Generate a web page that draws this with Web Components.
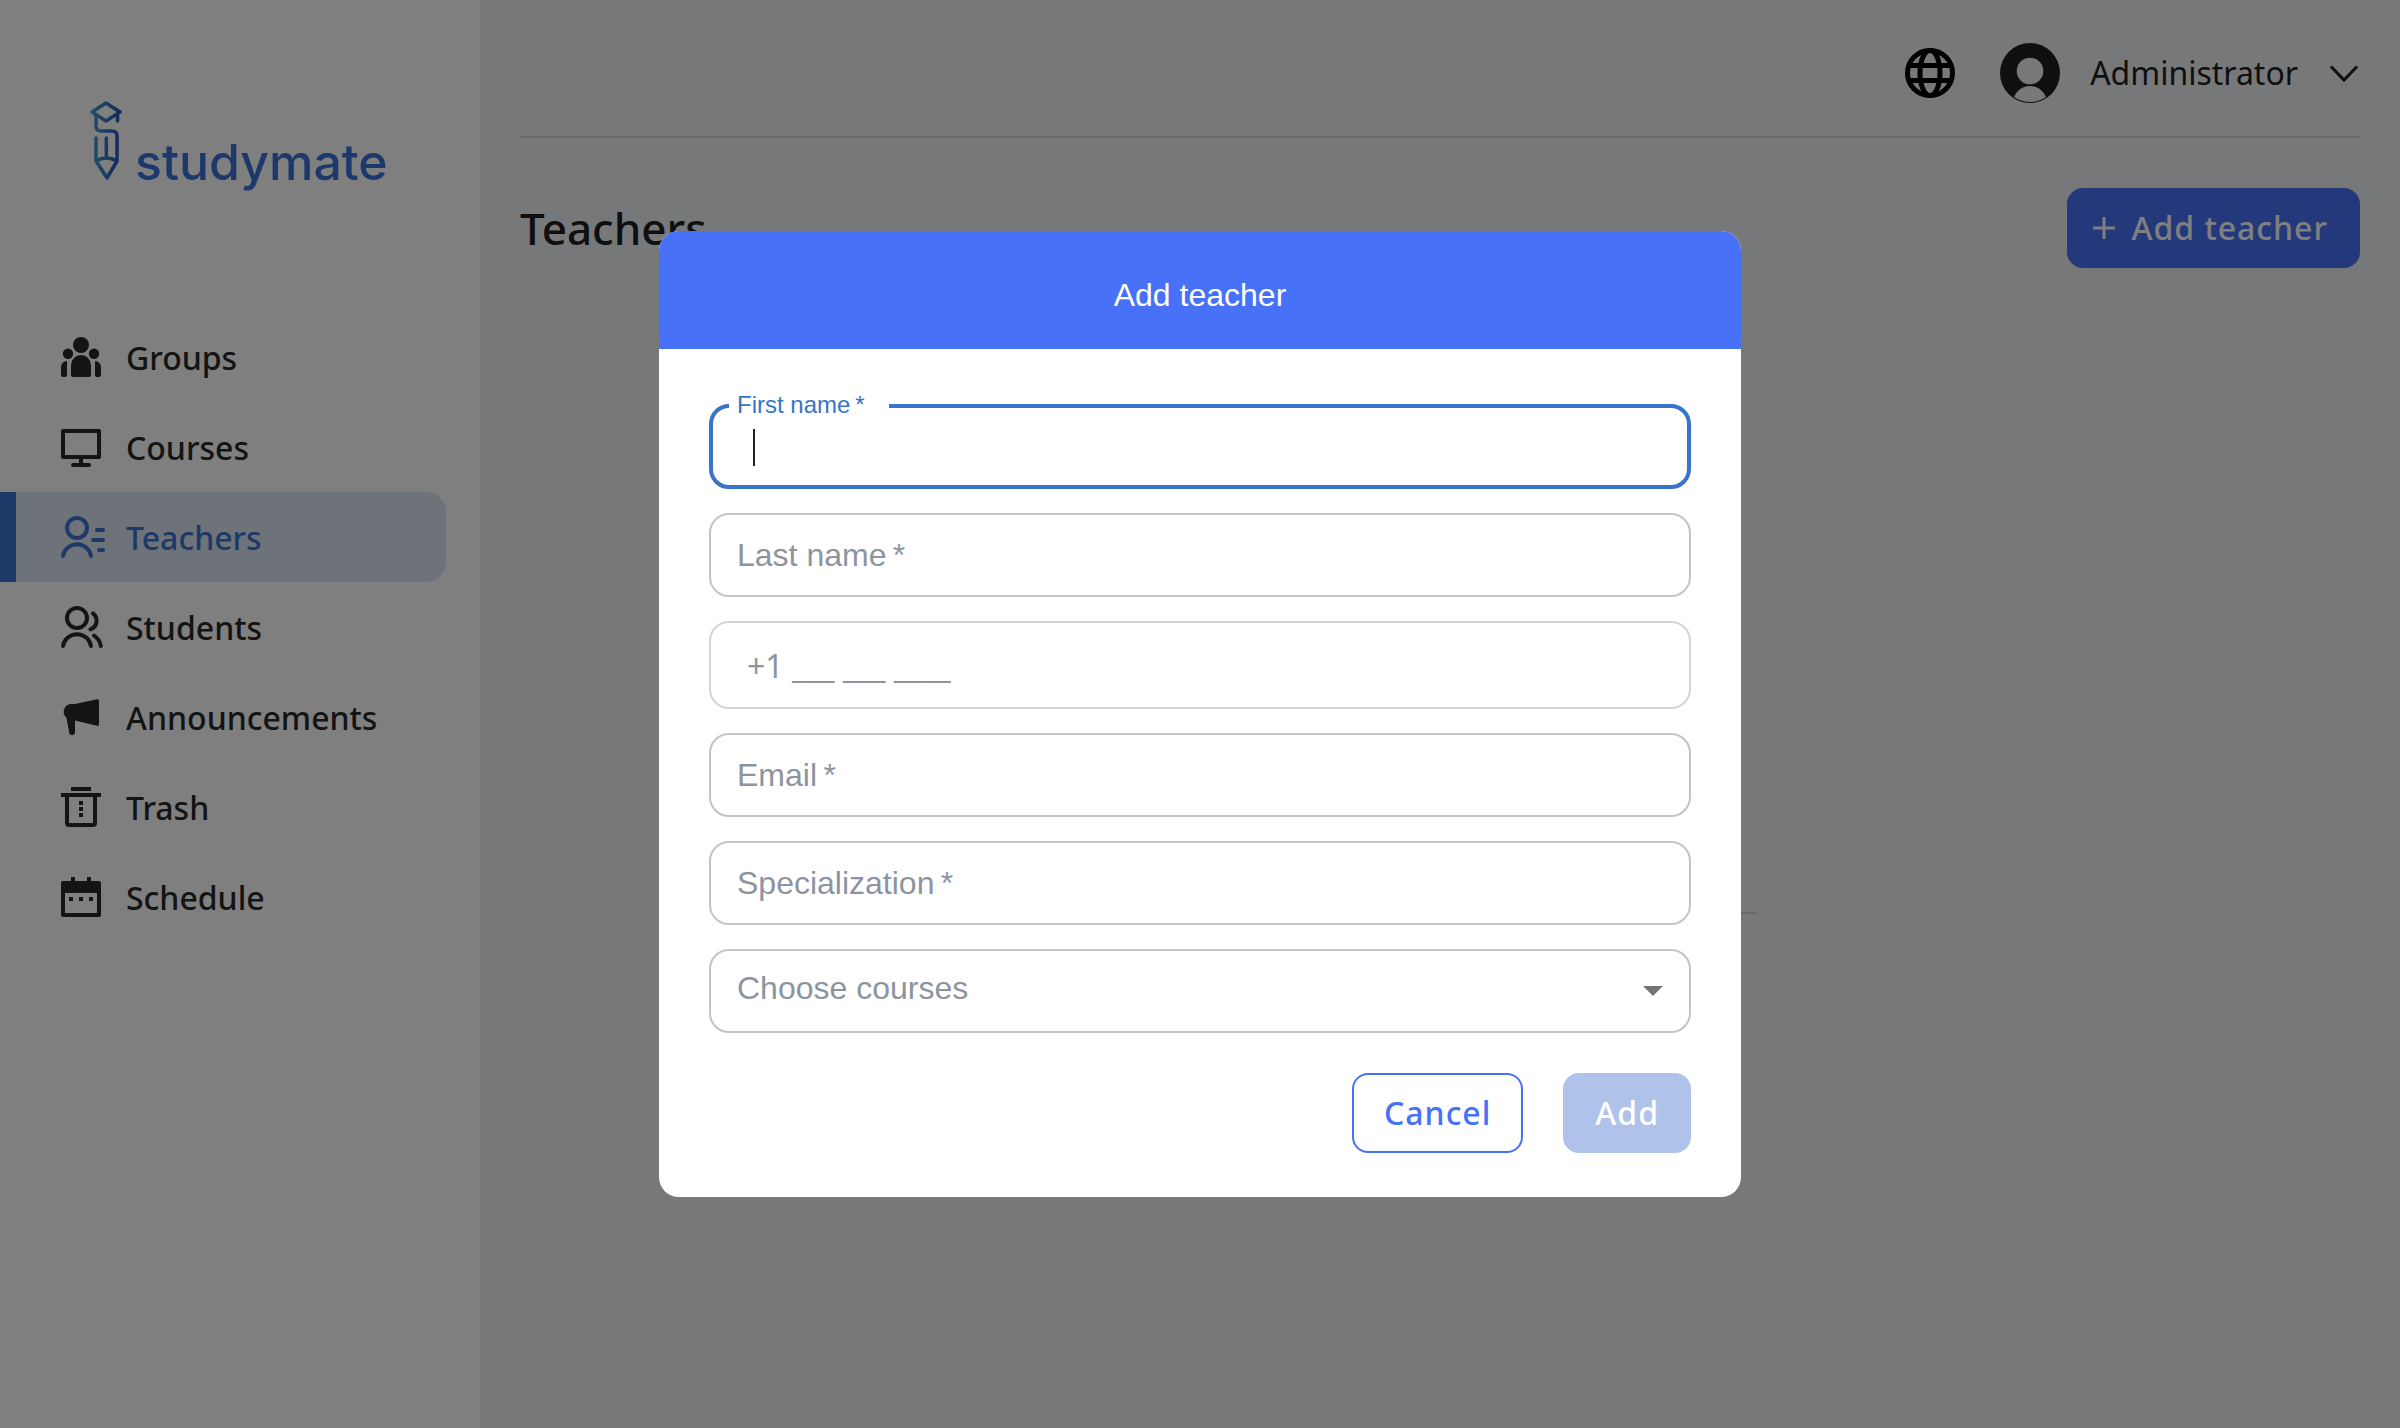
<!DOCTYPE html>
<html lang="en">
<head>
<meta charset="utf-8">
<title>Studymate – Teachers</title>
<style>
  html, body { height: 100%; }
  body { margin: 0; background: #eff0f4; font-family: "Noto Sans", "Open Sans", sans-serif; color: #292929; }
</style>
</head>
<body>
<study-app></study-app>

<script>
const ICONS = {
  groups: '<g fill="currentColor"><circle cx="12" cy="6" r="4"/><circle cx="5.5" cy="10.4" r="2.6"/><circle cx="18.500" cy="10.4" r="2.6"/><path d="M12 11a5 5 0 0 1 5 5v5a1 1 0 0 1-1 1H8a1 1 0 0 1-1-1v-5a5 5 0 0 1 5-5zM5 14v7a1 1 0 0 1-1 1H3a1 1 0 0 1-1-1v-4a3 3 0 0 1 3-3zM19 14a3 3 0 0 1 3 3v4a1 1 0 0 1-1 1h-1a1 1 0 0 1-1-1z"/></g>',
  courses: '<g fill="none" stroke="currentColor" stroke-width="2" stroke-linejoin="round" stroke-linecap="round"><path d="M3 4h18v13H3zM12 17v4M8 21h8"/></g>',
  teachers: '<g fill="none" stroke="currentColor" stroke-width="2" stroke-linecap="round"><circle cx="10" cy="7.500" r="5"/><path d="M3 21.500a7.100 7.100 0 0 1 14 0M20 8.500h3M18 13.500h5M21 18.500h2"/></g>',
  students: '<g fill="none" stroke="currentColor" stroke-width="2" stroke-linecap="round"><circle cx="10" cy="7.500" r="5"/><path d="M3 21.500a7.100 7.100 0 0 1 14 0M18 5.200a4.600 4.600 0 0 1-1.300 8M18.500 16.300a7.500 7.500 0 0 1 3.400 5.200"/></g>',
  announcements: '<path fill="currentColor" d="M20 3.100a.9.9 0 0 1 1 .9v11.500a.9.900 0 0 1-1.100.9L9 13.700V19.500a1.400 1.400 0 0 1-2.900.2L4.700 12.400A4 4 0 0 1 6.500 5.500H9z"/>',
  trash: '<path fill="none" stroke="currentColor" stroke-width="2" d="M7 3h10M2 6h20M5 6v14q0 1 1 1h12q1 0 1-1V6"/><path fill="currentColor" d="M11 9h2v2h-2zM11 12h2v2h-2zM11 15h2v2h-2z"/>',
  schedule: '<path fill="currentColor" fill-rule="evenodd" d="M7 2h2v2h6V2h2v2h4a1 1 0 0 1 1 1v16a1 1 0 0 1-1 1H3a1 1 0 0 1-1-1V5a1 1 0 0 1 1-1h4zM4 10v10h16V10zM6 12h2v2H6zM11 12h2v2h-2zM16 12h2v2h-2z"/>'
};

function define(name, html, setup) {
  const template = document.createElement('template');
  template.innerHTML = html;
  customElements.define(name, class extends HTMLElement {
    connectedCallback() {
      if (this.shadowRoot) return;
      const root = this.attachShadow({ mode: 'open' });
      root.append(template.content.cloneNode(true));
      if (setup) setup.call(this, root);
    }
  });
}

define('app-logo', `
<style>
  :host { display: flex; align-items: flex-start; gap: 12px; color: #3a72d6; }
  svg { width: 34px; height: 82px; flex: none; }
  span { font: 500 50px/72px Inter, sans-serif; padding-top: 26px; }
</style>
<svg viewBox="0 0 34 82" aria-hidden="true">
  <defs><linearGradient id="g" gradientUnits="userSpaceOnUse" x1="2" y1="40" x2="32" y2="40"><stop offset="0" stop-color="#4a9fd0"/><stop offset="1" stop-color="#2450b8"/></linearGradient></defs>
  <path fill="none" stroke="url(#g)" stroke-width="3.500" stroke-linejoin="round" stroke-linecap="round" d="M17 3L31 12L17 21L3 12zM28.500 14v7M7 15v11q0 5 5 5h11q5 0 5 5v25L18 78L7 61V38M17.300 38v19M7 61q5-3 10.500-3t10.500 3"/>
</svg>
<span>studymate</span>`);

define('nav-item', `
<style>
  :host { display: block; }
  a { display: flex; align-items: center; gap: 21px; height: 90px; margin-right: 34px; padding-left: 57px; box-sizing: border-box; border-radius: 0 20px 20px 0; color: #292929; font-size: 32px; font-weight: 500; text-decoration: none; }
  :host([active]) a { background: #dde6f4; color: #3a72d0; border-left: 16px solid #3a72d0; padding-left: 41px; }
  svg { width: 48px; height: 48px; overflow: visible; }
</style>
<a href="#"><svg viewBox="0 0 24 24" aria-hidden="true"></svg><slot></slot></a>`,
function (root) { root.querySelector('svg').innerHTML = ICONS[this.getAttribute('icon')]; });

define('side-bar', `
<style>
  :host { display: flex; flex-direction: column; width: 480px; flex: none; background: #fff; }
  app-logo { margin: 100px 0 0 89px; height: 212px; }
</style>
<app-logo></app-logo>
<nav aria-label="Main">
  <nav-item icon="groups">Groups</nav-item>
  <nav-item icon="courses">Courses</nav-item>
  <nav-item icon="teachers" active>Teachers</nav-item>
  <nav-item icon="students">Students</nav-item>
  <nav-item icon="announcements">Announcements</nav-item>
  <nav-item icon="trash">Trash</nav-item>
  <nav-item icon="schedule">Schedule</nav-item>
</nav>`);

define('app-button', `
<style>
  :host { display: inline-flex; }
  button { display: flex; align-items: center; gap: 16px; height: 80px; padding: 0 30px; border: 2px solid #4772f7; border-radius: 16px; background: #4772f7; color: #fff; font: 500 32px/44px "Noto Sans", "Open Sans", sans-serif; letter-spacing: 1px; }
  :host([outlined]) button { background: #fff; color: #4772f7; }
  :host([disabled]) button { background: #afc3ea; border-color: #afc3ea; }
  :host([icon]) button { padding-left: 24px; }
  svg { display: none; width: 22px; height: 22px; }
  :host([icon]) svg { display: block; }
</style>
<button type="button"><svg viewBox="0 0 22 22" aria-hidden="true"><path d="M11 1v20M1 11h20" stroke="currentColor" stroke-width="3" stroke-linecap="round"/></svg><slot></slot></button>`,
function (root) { root.querySelector('button').disabled = this.hasAttribute('disabled'); });

define('top-bar', `
<style>
  :host { display: flex; justify-content: flex-end; align-items: center; height: 136px; border-bottom: 2px solid #d4d4d8; }
  button { display: flex; align-items: center; border: 0; padding: 0; margin-top: 10px; background: none; color: #1f1f1f; font: 400 32px/44px "Noto Sans", "Open Sans", sans-serif; }
  .lang { color: #000; margin-right: 45px; }
  .user { gap: 30px; }
  svg { display: block; }
</style>
<button class="lang" type="button" aria-label="Language">
  <svg width="50" height="50" viewBox="0 0 50 50" fill="none" stroke="currentColor" stroke-width="5"><circle cx="25" cy="25" r="22.500"/><ellipse cx="25" cy="25" rx="10" ry="22.500"/><path d="M4 17.500h42M4 32.500h42"/></svg>
</button>
<button class="user" type="button">
  <svg width="60" height="60" viewBox="0 0 60 60"><defs><clipPath id="c"><circle cx="30" cy="30" r="29"/></clipPath></defs><circle cx="30" cy="30" r="30" fill="currentColor"/><circle cx="30" cy="28" r="13.300" fill="#eff0f4"/><ellipse cx="30" cy="60" rx="17" ry="17" fill="#eff0f4" clip-path="url(#c)"/></svg>
  <span>Administrator</span>
  <svg width="32" height="20" viewBox="0 0 32 20"><path d="M3 3.500L16 17L29 3.500" fill="none" stroke="currentColor" stroke-width="3"/></svg>
</button>`);

define('text-field', `
<style>
  :host { display: block; position: relative; }
  fieldset { margin: 0; padding: 0; min-width: 0; border: 2px solid #c4c4c4; border-radius: 20px; height: 84px; box-sizing: border-box; display: flex; align-items: center; }
  label { position: absolute; left: 28px; top: 24px; font: 32px/36px "Liberation Sans", Arial, sans-serif; color: #8d949f; pointer-events: none; }
  input { width: 100%; height: 80px; box-sizing: border-box; border: 0; outline: 0; padding: 0 36px; background: none; font: 32px/44px "Noto Sans", "Open Sans", sans-serif; color: #222; }
  input::placeholder { color: #8d949f; opacity: 1; }
  i { display: none; }
  :host([tall]) fieldset { height: 88px; border-color: #d4d4d4; }
  :host([active]) fieldset { height: 85px; border: 4px solid #3874cb; }
  :host([active]) label { top: -13px; left: 20px; padding: 0 24px 0 8px; font-size: 24px; line-height: 28px; background: #fff; color: #3874cb; }
  :host([active]) i { display: block; position: absolute; left: 44px; top: 25px; width: 2px; height: 37px; background: #222; }
</style>
<fieldset><input id="f"></fieldset><label for="f"></label><i></i>`,
function (root) {
  const input = root.querySelector('input'), label = root.querySelector('label');
  const text = this.getAttribute('label');
  if (text) label.textContent = text + '\u2009*'; else { label.remove(); input.setAttribute('aria-label', 'Phone'); }
  if (this.hasAttribute('placeholder')) input.placeholder = this.getAttribute('placeholder');
});

define('select-field', `
<style>
  :host { display: grid; align-items: center; }
  select, svg { grid-area: 1 / 1; }
  select { appearance: none; width: 100%; height: 84px; box-sizing: border-box; border: 2px solid #c4c4c4; border-radius: 20px; padding: 0 90px 6px 26px; background: #fff; color: #8d949f; font: 32px/36px "Liberation Sans", Arial, sans-serif; }
  svg { justify-self: end; margin-right: 28px; pointer-events: none; }
</style>
<select aria-label="Choose courses"><option>Choose courses</option></select>
<svg width="20" height="10" viewBox="0 0 20 10" aria-hidden="true"><path d="M0 0h20L10 10z" fill="#757575"/></svg>`);

define('teacher-dialog', `
<style>
  :host { position: fixed; inset: 0; display: flex; align-items: center; justify-content: center; background: rgba(0, 0, 0, .5); }
  section { width: 1082px; max-width: 92%; border-radius: 20px; overflow: hidden; background: #fff; }
  h2 { margin: 0; padding: 40px 0 30px; text-align: center; background: #4772f7; color: #fff; font: 400 32px/48px "Liberation Sans", Arial, sans-serif; }
  form { display: flex; flex-direction: column; gap: 24px; padding: 55px 50px 44px; }
  footer { display: flex; justify-content: flex-end; gap: 40px; padding-top: 16px; }
</style>
<section role="dialog" aria-label="Add teacher">
  <h2>Add teacher</h2>
  <form>
    <text-field label="First name" active></text-field>
    <text-field label="Last name"></text-field>
    <text-field placeholder="+1 ___ ___ ____" tall></text-field>
    <text-field label="Email"></text-field>
    <text-field label="Specialization"></text-field>
    <select-field></select-field>
    <footer><app-button outlined>Cancel</app-button><app-button disabled>Add</app-button></footer>
  </form>
</section>`);

define('study-app', `
<style>
  :host { display: flex; min-height: 100vh; }
  main { flex: 1; min-width: 0; padding: 0 40px; }
  header { display: flex; align-items: center; justify-content: space-between; padding-top: 50px; }
  h1 { margin: 0; font-size: 44px; line-height: 60px; font-weight: 500; color: #1f1f1f; }
  hr { width: 632px; max-width: 100%; height: 2px; border: 0; margin: 644px auto 0; background: #d4d4d8; }
</style>
<side-bar></side-bar>
<main>
  <top-bar></top-bar>
  <header><h1>Teachers</h1><app-button icon>Add teacher</app-button></header>
  <hr>
</main>
<teacher-dialog></teacher-dialog>`);
</script>
</body>
</html>
